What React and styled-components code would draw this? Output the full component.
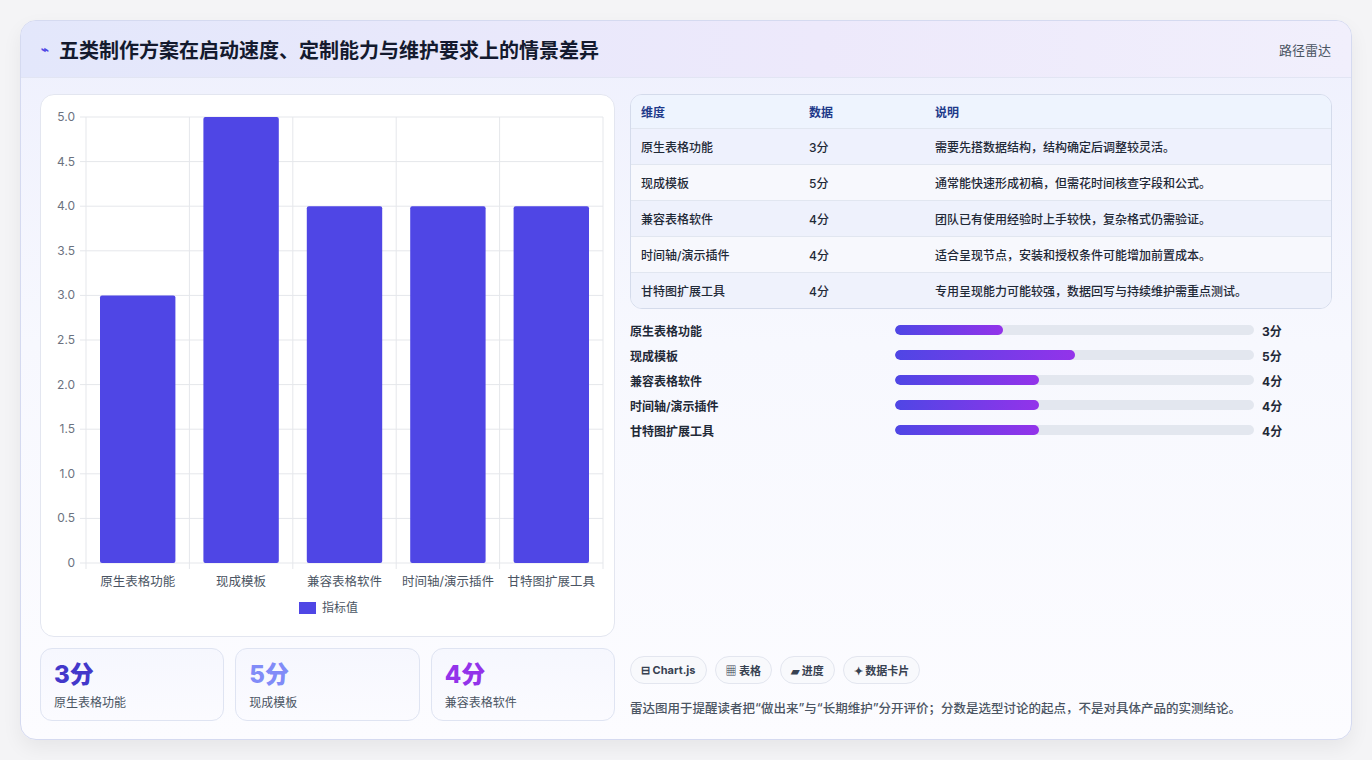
import React from "react";
import styled, { createGlobalStyle } from "styled-components";

const G = createGlobalStyle`
  body{margin:0;background:#f3f4f6;font-family:Inter,"Noto Sans CJK SC",sans-serif;}
`;
const data = [
  ["原生表格功能", 3, "需要先搭数据结构，结构确定后调整较灵活。"],
  ["现成模板", 5, "通常能快速形成初稿，但需花时间核查字段和公式。"],
  ["兼容表格软件", 4, "团队已有使用经验时上手较快，复杂格式仍需验证。"],
  ["时间轴/演示插件", 4, "适合呈现节点，安装和授权条件可能增加前置成本。"],
  ["甘特图扩展工具", 4, "专用呈现能力可能较强，数据回写与持续维护需重点测试。"],
];
const Page = styled.div`padding:20px 20px 20px 20px;height:760px;box-sizing:border-box;background:#f4f4f6;`;
const Card = styled.div`height:720px;box-sizing:border-box;border:1px solid #d5daf0;border-radius:16px;overflow:hidden;
  background:linear-gradient(180deg,#eef0fd 0%,#f7f8fe 45%,#fcfcff 100%);box-shadow:0 8px 20px rgba(0,0,0,.06);display:flex;flex-direction:column;`;
const Header = styled.div`height:56px;flex:none;display:flex;align-items:center;justify-content:space-between;padding:0 20px;
  background:linear-gradient(90deg,#e3e7fb,#ede9fb 60%,#f1effc);border-bottom:1px solid #e2e5f3;`;
const Title = styled.h1`margin:0;font-size:20px;font-weight:700;color:#141a2e;display:flex;align-items:center;gap:10px;`;
const Tag = styled.span`font-size:13px;color:#4b5563;`;
const Body = styled.div`flex:1;display:grid;grid-template-columns:575px 1fr;gap:15px;padding:16px 19px 18px 19px;`;
const Left = styled.div`display:flex;flex-direction:column;gap:11px;`;
const ChartBox = styled.div`height:543px;box-sizing:border-box;background:#fff;border:1px solid #e3e6f0;border-radius:14px;`;
const Stats = styled.div`display:grid;grid-template-columns:repeat(3,1fr);gap:11px;`;
const Stat = styled.div`height:73px;box-sizing:border-box;border:1px solid #dfe4f2;border-radius:12px;background:linear-gradient(180deg,#f6f7fe,#fbfbff);padding:12px 13px;`;
const StatV = styled.div`font-size:24px;font-weight:800;color:${p => p.c};line-height:28px;`;
const StatL = styled.div`font-size:12px;color:#4b5563;margin-top:4px;`;
const Right = styled.div`display:flex;flex-direction:column;`;
const Table = styled.div`border:1px solid #d4dbeb;border-radius:12px;overflow:hidden;font-size:12px;color:#1f2937;`;
const Row = styled.div`display:grid;grid-template-columns:168px 126px 1fr;height:${p => p.h || 35}px;align-items:center;padding:0 10px;
  background:${p => p.bg};border-top:${p => p.first ? "none" : "1px solid #e1e6f0"};font-weight:${p => p.head ? 700 : 500};color:${p => p.head ? "#1e3a8a" : "#1f2937"};`;
const Bars = styled.div`display:flex;flex-direction:column;gap:7px;margin-top:12px;`;
const BarRow = styled.div`display:grid;grid-template-columns:265px 367px 1fr;align-items:center;gap:0;font-size:12px;font-weight:600;color:#1f2937;height:18px;`;
const Track = styled.div`height:10px;border-radius:5px;background:#e3e7ef;overflow:hidden;margin-right:8px;`;
const Fill = styled.div`height:100%;border-radius:5px;background:linear-gradient(90deg,#4f46e5,#9333ea);`;
const Num = styled.span`padding-left:0px;font-weight:700;`;
const Spacer = styled.div`flex:1;`;
const Chips = styled.div`display:flex;gap:8px;`;
const Chip = styled.span`height:28px;box-sizing:border-box;padding:0 10px;border:1px solid #e3e6ef;border-radius:14px;background:#f8f9fc;font-size:11px;font-weight:700;color:#374151;display:flex;align-items:center;gap:4px;`;
const Note = styled.p`margin:14px 0 4px;font-size:12.5px;color:#4b5563;font-weight:500;`;

function Chart() {
  const x0 = 45, x1 = 562, yT = 22, yB = 468, w = (x1 - x0) / 5;
  const ticks = [0, .5, 1, 1.5, 2, 2.5, 3, 3.5, 4, 4.5, 5];
  const y = v => yB - (v / 5) * (yB - yT);
  return (
    <svg width="573" height="541" style={{ display: "block" }} fontFamily="Inter,'Noto Sans CJK SC',sans-serif">
      {ticks.map(t => (<g key={t}>
        <line x1={x0 - 6} x2={x1} y1={y(t)} y2={y(t)} stroke="#e5e7eb" />
        <text x={x0 - 11} y={y(t) + 4} fontSize="12" fill="#6b7280" textAnchor="end">{t === 0 ? "0" : t.toFixed(1)}</text>
      </g>))}
      {[0, 1, 2, 3, 4, 5].map(i => <line key={i} x1={x0 + i * w} x2={x0 + i * w} y1={yT} y2={yB + 6} stroke="#e5e7eb" />)}
      {data.map((d, i) => (<g key={i}>
        <rect x={x0 + i * w + 14} y={y(d[1])} width={w - 28} height={yB - y(d[1])} rx="2" fill="#4f46e5" />
        <text x={x0 + i * w + w / 2} y={491} fontSize="12.5" fill="#4b5563" textAnchor="middle">{d[0]}</text>
      </g>))}
      <rect x="258" y="507" width="17" height="12" fill="#4f46e5" />
      <text x="281" y="517" fontSize="12" fill="#4b5563">指标值</text>
    </svg>
  );
}

export default function App() {
  const bgs = ["#eef1fd", "#f7f8fd", "#eef1fc", "#f7f8fd", "#eff2fc"];
  return (<Page><G />
    <Card>
      <Header>
        <Title><span style={{ color: "#4f46e5", fontSize: 13 }}>⌁</span>五类制作方案在启动速度、定制能力与维护要求上的情景差异</Title>
        <Tag>路径雷达</Tag>
      </Header>
      <Body>
        <Left>
          <ChartBox><Chart /></ChartBox>
          <Stats>
            <Stat><StatV c="#4338ca">3分</StatV><StatL>原生表格功能</StatL></Stat>
            <Stat><StatV c="#818cf8">5分</StatV><StatL>现成模板</StatL></Stat>
            <Stat><StatV c="#9333ea">4分</StatV><StatL>兼容表格软件</StatL></Stat>
          </Stats>
        </Left>
        <Right>
          <Table>
            <Row head first h={33} bg="#eef4fe"><span>维度</span><span>数据</span><span>说明</span></Row>
            {data.map((d, i) => <Row key={i} bg={bgs[i]}><span>{d[0]}</span><span>{d[1]}分</span><span>{d[2]}</span></Row>)}
          </Table>
          <Bars>
            {data.map((d, i) => <BarRow key={i}><span>{d[0]}</span><Track><Fill style={{ width: d[1] * 10 + "%" }} /></Track><Num>{d[1]}分</Num></BarRow>)}
          </Bars>
          <Spacer />
          <Chips>
            <Chip>⊟ Chart.js</Chip><Chip>▦ 表格</Chip><Chip>▰ 进度</Chip><Chip>✦ 数据卡片</Chip>
          </Chips>
          <Note>雷达图用于提醒读者把“做出来”与“长期维护”分开评价；分数是选型讨论的起点，不是对具体产品的实测结论。</Note>
        </Right>
      </Body>
    </Card>
  </Page>);
}
